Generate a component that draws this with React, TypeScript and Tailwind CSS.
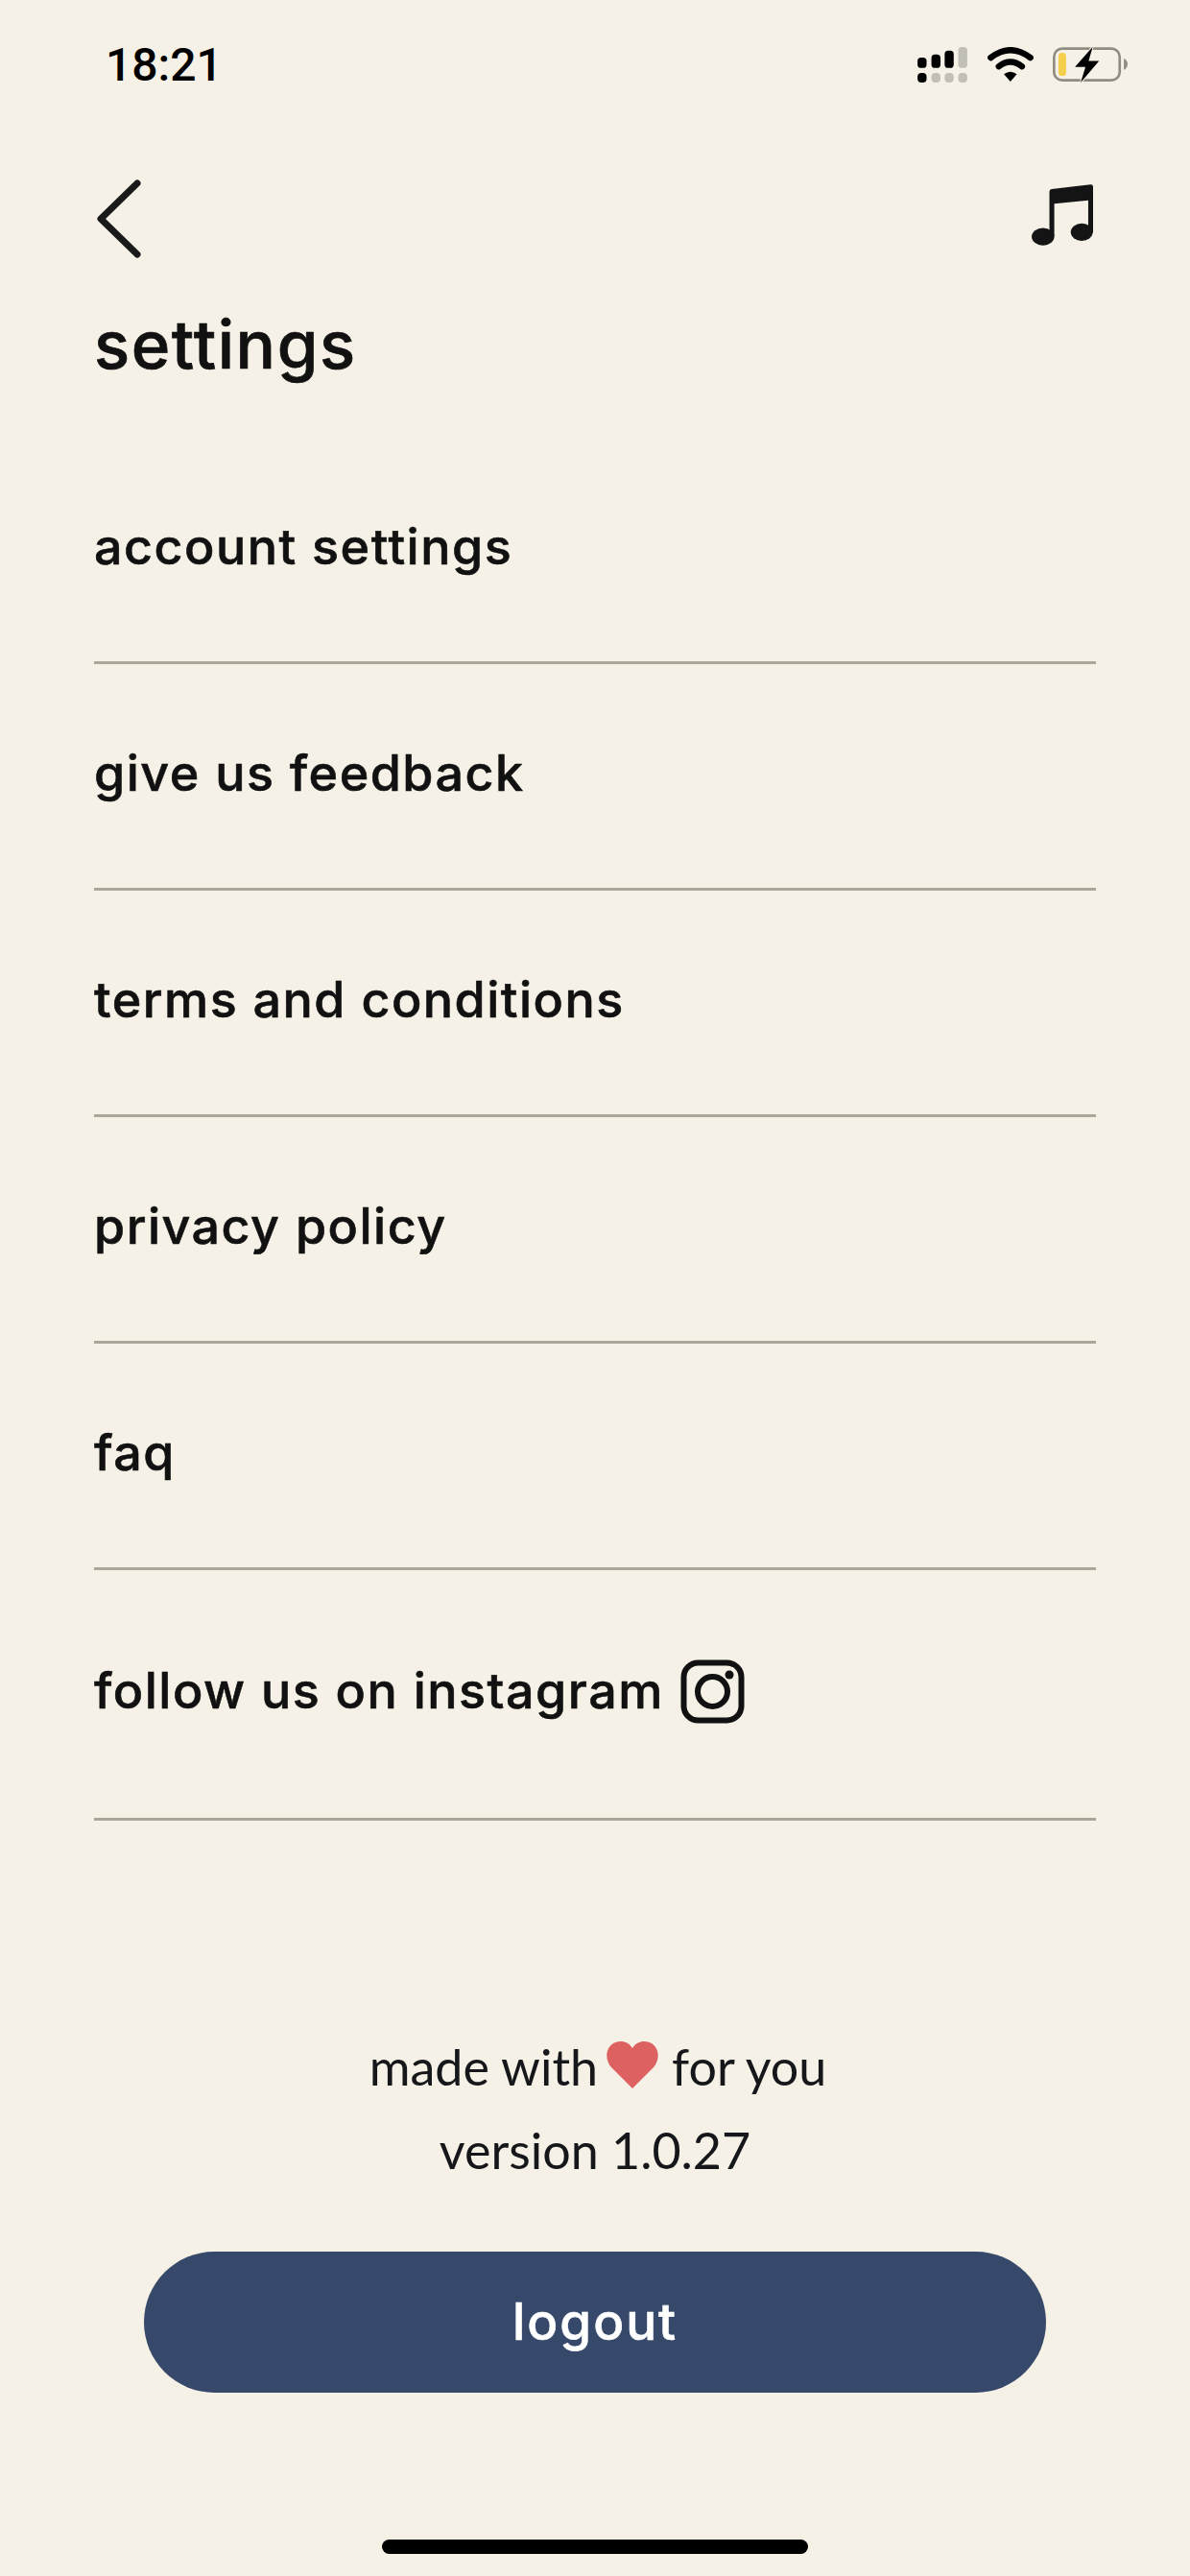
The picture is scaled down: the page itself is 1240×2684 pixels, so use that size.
const rows = [
  "account settings",
  "give us feedback",
  "terms and conditions",
  "privacy policy",
  "faq",
];

const StatusIcons = () => {
  return (
    <div className="flex items-start">
      <svg width="52" height="37" viewBox="172 87 154 110" className="mt-[49px]">
        <rect x="172" y="120" width="28" height="32" rx="11" fill="#000" />
        <rect x="215" y="110" width="28" height="42" rx="11" fill="#000" />
        <rect x="256" y="98" width="28" height="54" rx="11" fill="#000" />
        <rect x="298" y="87" width="28" height="65" rx="11" fill="#c2bfb6" />
        <rect x="172" y="167" width="28" height="30" rx="12" fill="#000" />
        <rect x="215" y="167" width="28" height="30" rx="12" fill="#c2bfb6" />
        <rect x="256" y="167" width="28" height="30" rx="12" fill="#c2bfb6" />
        <rect x="298" y="167" width="28" height="30" rx="12" fill="#c2bfb6" />
      </svg>
      <svg width="48" height="36" viewBox="390 88 143 107" className="ml-[21px] mt-[49px]">
        <path d="M400 121 Q461 74 523 121" fill="none" stroke="#000" strokeWidth="19" strokeLinecap="round" />
        <path d="M425 148 Q461 120 497 148" fill="none" stroke="#000" strokeWidth="19" strokeLinecap="round" />
        <path d="M441 172 Q461 157 481 172 L461 195 Z" fill="#000" />
      </svg>
      <svg width="80" height="39" viewBox="590 84 240 118" className="ml-[19px] mt-[48px]">
        <rect x="596" y="92" width="207" height="100" rx="26" fill="none" stroke="#8f8c82" strokeWidth="8" />
        <rect x="610" y="105" width="24" height="73" rx="11" fill="#f5cf4b" />
        <path d="M816 122 Q828 130 828 141 Q828 152 816 160 Z" fill="#8f8c82" />
        <path
          d="M718 86 L662 150 L695 150 L680 199 L738 131 L705 131 Z"
          fill="#000"
          stroke="#f5f1e6"
          strokeWidth="6"
          paintOrder="stroke"
          strokeLinejoin="round"
        />
      </svg>
    </div>
  );
};

const MusicIcon = () => {
  return (
    <svg width="64" height="64" viewBox="0 0 190 190">
      <path d="M55 22 Q55 16 62 15 L182 1 Q190 0 190 8 L190 48 L70 60 L70 160 L55 160 Z" fill="#141414" />
      <rect x="175" y="40" width="15" height="110" fill="#141414" />
      <ellipse cx="35" cy="162" rx="35" ry="27" fill="#141414" />
      <ellipse cx="155" cy="148" rx="34" ry="27" fill="#141414" />
    </svg>
  );
};

const InstagramIcon = () => {
  return (
    <svg width="67" height="67" viewBox="0 0 67 67" className="ml-[17px] shrink-0">
      <rect x="3.5" y="3.5" width="60" height="60" rx="15" fill="none" stroke="#111" strokeWidth="6" />
      <circle cx="33.5" cy="33.5" r="15.5" fill="none" stroke="#111" strokeWidth="6" />
      <circle cx="51" cy="16" r="4.5" fill="#111" />
    </svg>
  );
};

const App = () => {
  return (
    <div className="w-[1240px] h-[2684px] bg-[#f5f1e6] flex flex-col font-[Inter,sans-serif] text-[#111]">
      <div className="flex justify-between pl-[110px] pr-[64px] h-[130px]">
        <span className="font-[Roboto,sans-serif] font-medium text-[48px] leading-[56px] mt-[40px] text-[#000]">
          18:21
        </span>
        <StatusIcons />
      </div>

      <div className="flex justify-between items-start px-[98px] h-[190px] pt-[57px]">
        <svg width="50" height="82" viewBox="0 0 50 82" className="ml-[2px]">
          <path d="M43 4 L5 41 L43 78" fill="none" stroke="#1a1a1a" strokeWidth="7" strokeLinecap="round" strokeLinejoin="round" />
        </svg>
        <div className="mt-[5px] mr-[3px] -ml-[3px]">
          <MusicIcon />
        </div>
      </div>

      <h1 className="px-[98px] text-[69px] leading-[80px] font-medium [-webkit-text-stroke:0.7px] h-[136px] tracking-[1.5px] -mt-[1px] mb-[1px]">
        settings
      </h1>

      <div className="flex flex-col px-[98px]">
        {rows.map((row) => (
          <div
            key={row}
            className="pt-[86px] pb-[94px] border-b-[3px] border-[#a9a79a] h-[236px] text-[52px] leading-[56px] font-medium [-webkit-text-stroke:0.6px] tracking-[1.5px]"
          >
            {row}
          </div>
        ))}
        <div className="flex items-center pt-[93px] pb-[99px] h-[261px] border-b-[3px] border-[#a9a79a] text-[52px] leading-[56px] font-medium [-webkit-text-stroke:0.6px] tracking-[1.5px]">
          <span>follow us on instagram</span>
          <InstagramIcon />
        </div>
      </div>

      <div className="flex flex-col items-center mt-[213px] font-[Lato,sans-serif] text-[52px] leading-[87px] text-[#15171a]">
        <div className="flex items-center pl-[6px]">
          <span>made with</span>
          <svg width="54" height="50" viewBox="0 0 54 50" className="ml-[9px] mr-[14px] -mt-[6px]">
            <path
              d="M27 50 L5 28 C-2 20 -1 8 7 3 C14 -1 23 1 27 8 C31 1 40 -1 47 3 C55 8 56 20 49 28 Z"
              fill="#dd6161"
            />
          </svg>
          <span>for you</span>
        </div>
        <div>version 1.0.27</div>
      </div>

      <button className="mt-[62px] mx-[150px] h-[147px] rounded-full bg-[#37496b] text-white text-[53px] font-medium [-webkit-text-stroke:0.6px] tracking-[2px]">
        logout
      </button>

      <div className="mt-[153px] mx-auto w-[444px] h-[15px] rounded-full bg-black" />
    </div>
  );
};

export default App;
